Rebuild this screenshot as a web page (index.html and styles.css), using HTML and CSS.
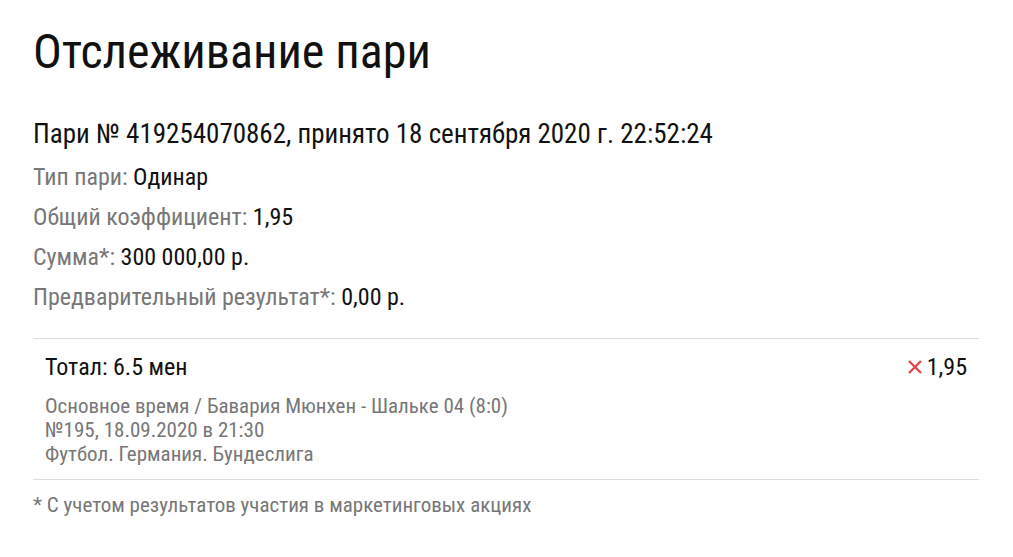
FILE: index.html
```html
<!DOCTYPE html>
<html lang="ru">
<head>
  <meta charset="UTF-8">
  <title>Отслеживание пари</title>
  <link rel="stylesheet" href="styles.css">
</head>
<body>

<h1>Отслеживание пари</h1>

<div class="bet-info">
  <h2>Пари № 419254070862, принято 18 сентября 2020 г. 22:52:24</h2>
  <div class="row"><span class="label">Тип пари:</span> Одинар</div>
  <div class="row"><span class="label">Общий коэффициент:</span> 1,95</div>
  <div class="row"><span class="label">Сумма*:</span> 300 000,00 р.</div>
  <div class="row"><span class="label">Предварительный результат*:</span> 0,00 р.</div>
</div>

<div class="event">
  <div class="event-head">
    <span class="outcome">Тотал: 6.5 мен</span>
    <span class="coef">
      <svg class="lost" width="16" height="16" viewBox="0 0 16 16">
        <path d="M2 2 L14 14 M14 2 L2 14" stroke="#e0474c" stroke-width="2.4" fill="none"/>
      </svg>
      1,95
    </span>
  </div>
  <div class="event-details">
    Основное время / Бавария Мюнхен - Шальке 04 (8:0)<br>
    №195, 18.09.2020 в 21:30<br>
    Футбол. Германия. Бундеслига
  </div>
</div>

<p class="note">* С учетом результатов участия в маркетинговых акциях</p>

</body>
</html>
```

FILE: styles.css
```css
body {
  font-family: "Roboto Condensed", Roboto, sans-serif;
  font-stretch: condensed;
  color: #111;
  margin: 0;
  padding: 0 34px 0 33px;
  background: #fff;
}
h1 {
  font-size: 48px;
  font-weight: 400;
  margin: 25px 0 0;
  line-height: 54px;
}
.bet-info h2 {
  font-size: 27px;
  font-weight: 400;
  margin: 40px 0 0;
  line-height: 30px;
}
.row {
  font-size: 24px;
  line-height: 40px;
}
.row:first-of-type {
  margin-top: 8px;
}
.label {
  color: #777;
}
.event {
  margin-top: 21px;
  border-top: 1px solid #ddd;
  border-bottom: 1px solid #ddd;
  padding: 14px 12px 13px;
}
.event-head {
  display: flex;
  justify-content: space-between;
  align-items: center;
  font-size: 24px;
  line-height: 28px;
}
.coef {
  display: flex;
  align-items: center;
  gap: 4px;
}
.event-details {
  margin-top: 13px;
  font-size: 21px;
  line-height: 24px;
  color: #777;
}
.note {
  margin: 13px 0 0;
  font-size: 21px;
  color: #777;
}
```
